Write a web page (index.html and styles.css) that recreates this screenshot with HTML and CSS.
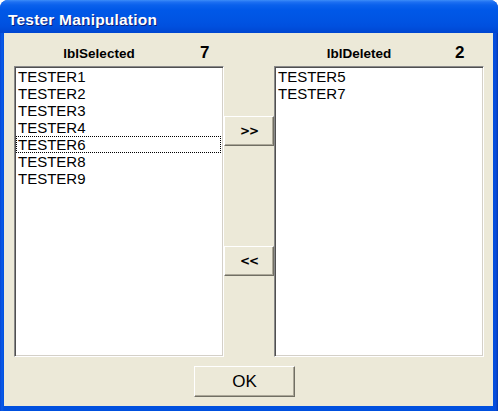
FILE: index.html
```html
<!DOCTYPE html>
<html>
<head>
<meta charset="utf-8">
<title>Tester Manipulation</title>
<link rel="stylesheet" href="styles.css">
</head>
<body>
<div class="window">
  <div class="titlebar"><span class="title">Tester Manipulation</span></div>
  <div class="client">
    <div class="main">
      <div class="col">
        <div class="header left-header">
          <span class="label">lblSelected</span>
          <span class="count">7</span>
        </div>
        <ul class="list">
          <li>TESTER1</li>
          <li>TESTER2</li>
          <li>TESTER3</li>
          <li>TESTER4</li>
          <li class="focus">TESTER6</li>
          <li>TESTER8</li>
          <li>TESTER9</li>
        </ul>
      </div>
      <div class="mid">
        <button class="btn move move-right">&gt;&gt;</button>
        <button class="btn move move-left">&lt;&lt;</button>
      </div>
      <div class="col">
        <div class="header right-header">
          <span class="label">lblDeleted</span>
          <span class="count">2</span>
        </div>
        <ul class="list">
          <li>TESTER5</li>
          <li>TESTER7</li>
        </ul>
      </div>
    </div>
    <div class="footer">
      <button class="btn ok">OK</button>
    </div>
  </div>
</div>
</body>
</html>
```

FILE: styles.css
```css
html, body {
  margin: 0;
  padding: 0;
  background: #ffffff;
}

body {
  width: 498px;
  height: 411px;
  overflow: hidden;
  font-family: "Liberation Sans", Arial, sans-serif;
}

.window {
  width: 498px;
  height: 411px;
  box-sizing: border-box;
  display: flex;
  flex-direction: column;
  background: linear-gradient(90deg, #0848D4 0, #0A5BE8 2px, #0050DF 4px, #0050DF 493px, #0A4BD8 496px, #0037B0 498px);
  border-radius: 8px 8px 0 0;
  overflow: hidden;
}

.titlebar {
  height: 33px;
  flex: none;
  box-sizing: border-box;
  padding: 0 0 0 8px;
  display: flex;
  align-items: flex-start;
  background: linear-gradient(180deg, #3C8DF8 0, #1E70F2 2px, #0A61EC 5px, #0058E8 10px, #0055E4 18px, #0050DF 26px, #0049D5 31px, #0046D0 33px);
}

.title {
  margin-top: 11px;
  color: #ffffff;
  font-family: "Liberation Sans", Arial, sans-serif;
  font-weight: bold;
  font-size: 15.5px;
  line-height: 17px;
  letter-spacing: 0.2px;
  text-shadow: 1px 1px 0 #0A1E7A;
}

.client {
  flex: 1;
  margin: 0 5px 5px 4px;
  background-color: #ECE9D8;
  padding: 0 9px 0 10px;
  display: flex;
  flex-direction: column;
}

.main {
  display: flex;
  align-items: flex-start;
}

.col {
  width: 210px;
  display: flex;
  flex-direction: column;
}

.header {
  height: 33px;
  box-sizing: border-box;
  padding-top: 10px;
  display: flex;
  align-items: baseline;
  line-height: 20px;
  color: #000;
}

.label {
  width: 170px;
  text-align: center;
  font-weight: bold;
  font-size: 13.5px;
}

.count {
  font-weight: bold;
  font-size: 17px;
}

.left-header .count {
  margin-left: 16px;
}

.right-header .count {
  margin-left: 11px;
}

.list {
  list-style: none;
  margin: 0;
  padding: 0;
  height: 291px;
  box-sizing: border-box;
  background: #ffffff;
  border: 1px solid;
  border-color: #8A8A8A #FFFFFF #FFFFFF #8A8A8A;
  box-shadow: inset 1px 1px 0 #505050, inset -1px -1px 0 #D4D0C8;
  padding: 1px;
}

.list li {
  height: 17px;
  line-height: 17px;
  font-size: 15px;
  color: #000;
  padding-left: 2px;
  box-sizing: border-box;
}

.list li.focus {
  outline: 1px dotted #000;
  outline-offset: -1px;
  margin-right: 1px;
}

.mid {
  width: 50px;
  display: flex;
  flex-direction: column;
  padding-top: 83px;
}

.btn {
  font-family: "Liberation Sans", Arial, sans-serif;
  color: #000;
  background: #ECE9D8;
  border: 1px solid;
  border-color: #FFFFFF #716F64 #716F64 #FFFFFF;
  box-shadow: inset -1px -1px 0 #ACA899;
  padding: 0;
  margin: 0;
  cursor: default;
}

.move {
  width: 50px;
  height: 30px;
  font-family: "DejaVu Sans", sans-serif;
  font-weight: bold;
  font-size: 12px;
  letter-spacing: -1px;
}

.move-left {
  margin-top: 100px;
}

.footer {
  display: flex;
  padding: 9px 0 0 180px;
}

.ok {
  width: 101px;
  height: 31px;
  font-size: 17px;
}
```
